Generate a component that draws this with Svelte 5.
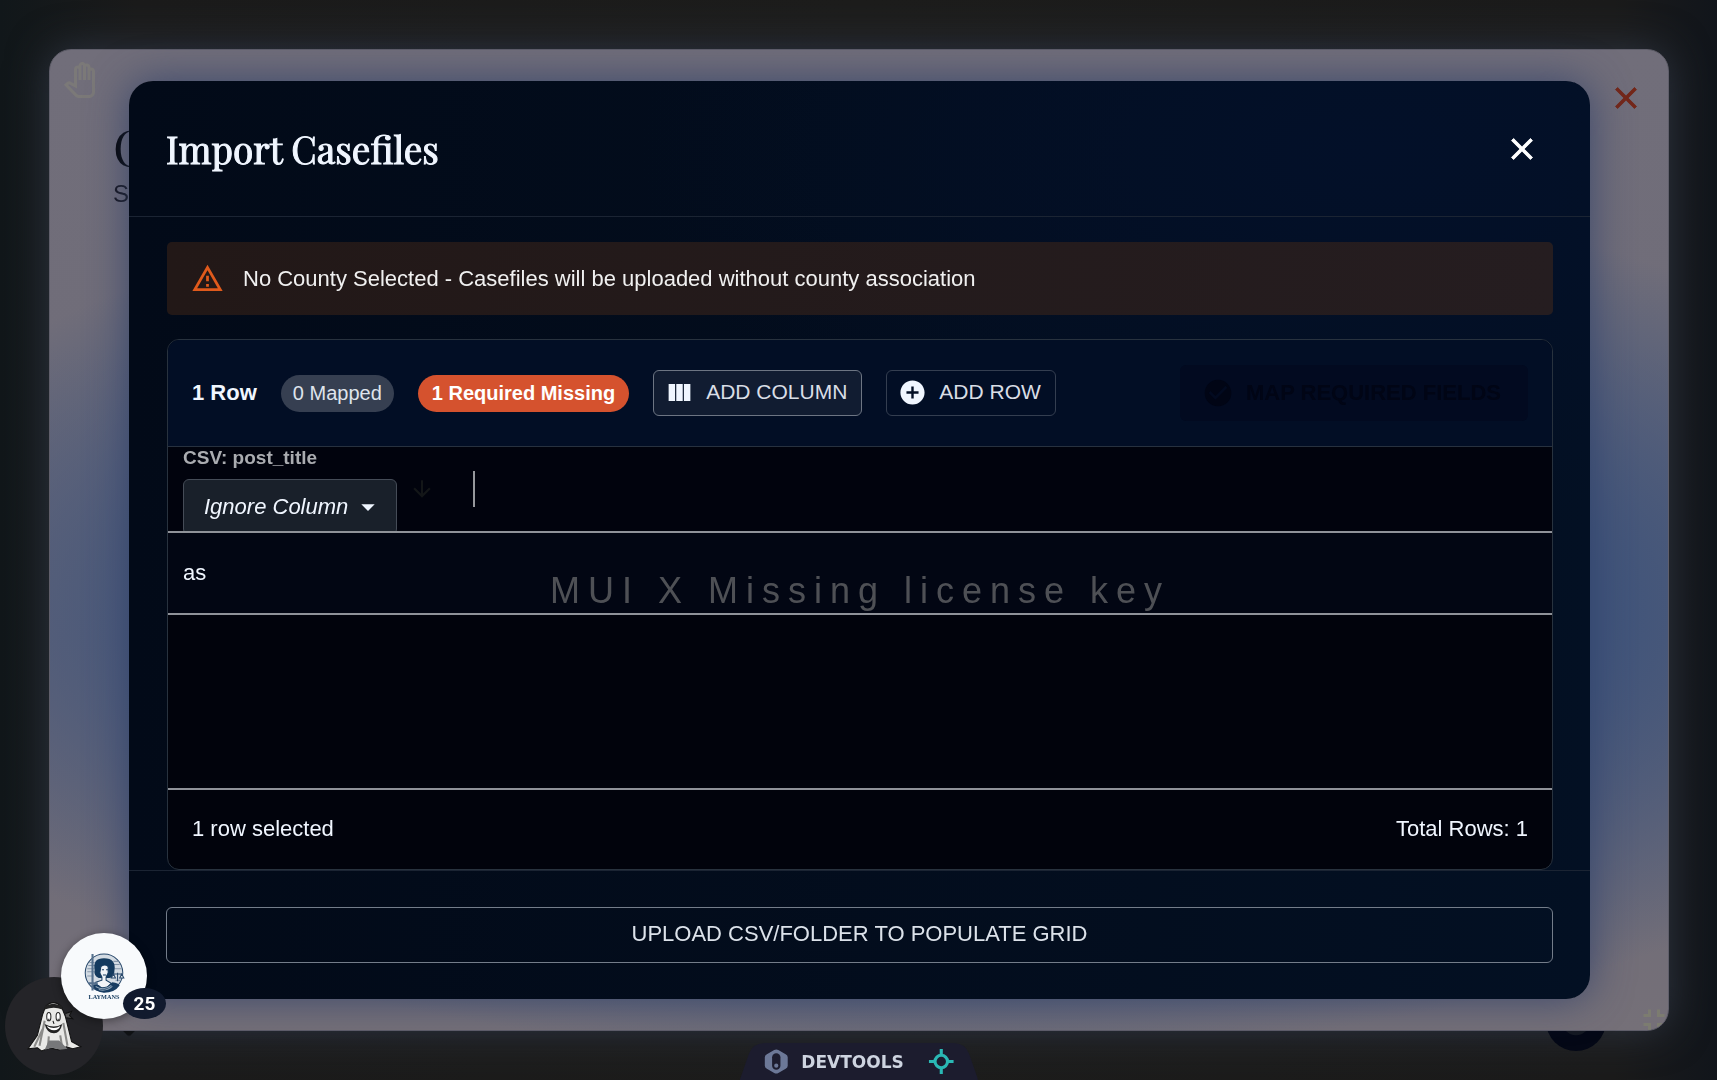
<script>
  const columns = [{ field: 'post_title', mapping: 'Ignore Column' }];
  let rows = $state([{ post_title: 'as' }]);
  let mapped = $state(0);
  let missing = $state(1);

  const addRow = () => rows.push({ post_title: '' });
</script>

<div class="stage">
  <button class="help" aria-label="Help">
    <svg viewBox="0 0 24 24"><circle cx="12" cy="12" r="8" fill="none" stroke="currentColor" stroke-width="3" /></svg>
  </button>
  <span class="tip"></span>

  <main class="backdrop-window">
    <div class="window-bar">
      <svg class="hand" viewBox="0 0 24 24">
        <path d="M18 24h-6.55c-1.08 0-2.14-.45-2.89-1.23l-7.3-7.61 2.07-1.83c.62-.55 1.53-.66 2.26-.27L8 14.34V4.79c0-1.38 1.12-2.5 2.5-2.5.17 0 .34.02.51.05.09-1.3 1.17-2.33 2.49-2.33.86 0 1.61.43 2.06 1.09.29-.12.61-.18.94-.18 1.38 0 2.5 1.12 2.5 2.5v.28c.16-.03.33-.05.5-.05 1.38 0 2.5 1.12 2.5 2.5V20c0 2.21-1.79 4-4 4zM4.14 15.28l5.86 6.1c.38.39.9.62 1.44.62H18c1.1 0 2-.9 2-2V6.15c0-.28-.22-.5-.5-.5s-.5.22-.5.5V12h-2V3.42c0-.28-.22-.5-.5-.5s-.5.22-.5.5V12h-2V2.51c0-.28-.22-.5-.5-.5s-.5.22-.5.5V12h-2V4.79c0-.28-.22-.5-.5-.5s-.5.23-.5.5v12.87l-5.35-2.83-.51.45z" />
      </svg>
      <button class="icon-button danger" aria-label="Close window">
        <svg viewBox="0 0 24 24" stroke="currentColor" stroke-width=".6" stroke-linejoin="round"><path d="M19 6.41 17.59 5 12 10.59 6.41 5 5 6.41 10.59 12 5 17.59 6.41 19 12 13.41 17.59 19 19 17.59 13.41 12z" /></svg>
      </button>
    </div>
    <div class="window-head">
      <h1>C</h1>
      <p>S</p>
    </div>
    <svg class="shrink" viewBox="0 0 24 24">
      <path d="M5 16h3v3h2v-5H5v2zm3-8H5v2h5V5H8v3zm6 11h2v-3h3v-2h-5v5zm2-11V5h-2v5h5V8h-3z" />
    </svg>
  </main>

  <section class="dialog" role="dialog" aria-labelledby="dialog-title">
    <header>
      <h2 id="dialog-title">Import Casefiles</h2>
      <button class="icon-button" aria-label="Close">
        <svg viewBox="0 0 24 24" stroke="currentColor" stroke-width=".6" stroke-linejoin="round"><path d="M19 6.41 17.59 5 12 10.59 6.41 5 5 6.41 10.59 12 5 17.59 6.41 19 12 13.41 17.59 19 19 17.59 13.41 12z" /></svg>
      </button>
    </header>

    <div class="content">
      <div class="alert" role="alert">
        <svg viewBox="0 0 24 24"><path d="M12 5.99 19.53 19H4.47L12 5.99M12 2 1 21h22L12 2zm1 14h-2v2h2v-2zm0-6h-2v4h2v-4z" /></svg>
        No County Selected - Casefiles will be uploaded without county association
      </div>

      <div class="grid">
        <div class="toolbar">
          <strong>{rows.length} Row</strong>
          <span class="chip">{mapped} Mapped</span>
          <span class="chip error">{missing} Required Missing</span>
          <button class="tool active">
            <svg viewBox="0 0 24 24"><path d="M14.67 5v14H9.33V5h5.34zm1 14H21V5h-5.33v14zm-7.34 0V5H3v14h5.33z" /></svg>
            ADD COLUMN
          </button>
          <button class="tool" onclick={addRow}>
            <svg viewBox="0 0 24 24"><path d="M12 2C6.48 2 2 6.48 2 12s4.48 10 10 10 10-4.48 10-10S17.52 2 12 2zm5 11h-4v4h-2v-4H7v-2h4V7h2v4h4v2z" /></svg>
            ADD ROW
          </button>
          <button class="map" disabled>
            <svg viewBox="0 0 24 24"><path d="M12 2C6.48 2 2 6.48 2 12s4.48 10 10 10 10-4.48 10-10S17.52 2 12 2zm-2 15-5-5 1.41-1.41L10 14.17l7.59-7.59L19 8l-9 9z" /></svg>
            MAP REQUIRED FIELDS
          </button>
        </div>

        <div class="body">
          <table>
            <thead>
              <tr>
                {#each columns as column}
                  <th>
                    <div class="column-head">
                      <div class="mapping">
                        <label for={column.field}>CSV: {column.field}</label>
                        <div class="select">
                          <select id={column.field}>
                            <option>{column.mapping}</option>
                          </select>
                          <svg viewBox="0 0 24 24"><path d="m7 10 5 5 5-5z" /></svg>
                        </div>
                      </div>
                      <svg class="sort" viewBox="0 0 24 24"><path d="m20 12-1.41-1.41L13 16.17V4h-2v12.17l-5.58-5.59L4 12l8 8 8-8z" /></svg>
                      <span class="separator"></span>
                    </div>
                  </th>
                {/each}
              </tr>
            </thead>
            <tbody>
              {#each rows as row}
                <tr>
                  {#each columns as column}
                    <td>{row[column.field]}</td>
                  {/each}
                </tr>
              {/each}
            </tbody>
          </table>
          <div class="watermark">MUI X Missing license key</div>
        </div>

        <div class="grid-footer">
          <span>1 row selected</span>
          <span>Total Rows: {rows.length}</span>
        </div>
      </div>
    </div>

    <footer>
      <button class="upload">UPLOAD CSV/FOLDER TO POPULATE GRID</button>
    </footer>
  </section>
</div>

<button class="ghost" aria-label="Assistant">
  <svg viewBox="0 0 54 50">
    <path d="M19 6q7-7 15 0l4 10 6 24 9 5-8 2-6-2-7 3-9-2-8 3-4-3-9 1 9-13 5-20z" fill="#e9e9e7" stroke="#111" stroke-width="1" />
    <path d="M18 20 13 44M16 28 8 45M36 22l4 22M33 34l2 12M22 35l-1 12" stroke="#8b8b89" stroke-width="2" fill="none" />
    <path d="M22 39h10l8 8-7 1-8-2-7 2z" fill="#77787a" />
    <path d="M18 6q8-5 17 0v3q-8-3-17 0z" fill="#222" />
    <path d="M38 13l6-2-2 4 3 3-6-1" fill="#555" stroke="#111" />
    <ellipse cx="22" cy="16" rx="2" ry="4" fill="#fff" stroke="#222" />
    <ellipse cx="31" cy="16" rx="2" ry="4" fill="#fff" stroke="#222" />
    <path d="M22 18v2M31 18v2M26 20l1 3" stroke="#111" stroke-width="1" />
    <path d="M18 23q9 5 17 0-2 9-8 9-7 0-9-9z" fill="#222" />
    <path d="M20 25q7 4 13 0-1 4-6 4t-7-4z" fill="#fff" />
  </svg>
</button>

<button class="brand" aria-label="Laymans, 25 notifications">
  <svg viewBox="0 0 40 46">
    <circle cx="20" cy="20" r="18" fill="#d3dbe3" stroke="#29496c" stroke-width="1" />
    <path d="M5 13h7M4 16h7M4 19h7M4 23h6M6 10h5M29 9h5M29 12h6M30 16h7M31 27h6" stroke="#8798ab" />
    <path d="M11 17q-2-11 9-11 12 0 10 12 0 7-5 7H15q-5-2-4-8z" fill="#143a5e" />
    <path d="M17 14q4-3 7 0v6l-2 4v3l5 3-5 5-7-1-3-5 6-2v-3l-2-4z" fill="#f1f4f7" stroke="#143a5e" stroke-width="1" />
    <path d="M18 17h2M22 17h2M19 22h3" stroke="#143a5e" />
    <path d="M8 32q5-3 10 2l5-1 5-4q6 1 7 3-5 7-15 7-8-1-12-7z" fill="#173c61" />
    <path d="M12 33q8 5 15-1M15 36q7 2 13-3" fill="none" stroke="#8ea4b8" />
    <path d="M9 2v30M5 30h9M9 31v6" stroke="#55708d" stroke-width="2" />
    <path d="M29 21h8M33 20v8M29 21l-2 4h4zM37 21l-2 4h4z" stroke="#29496c" fill="#e9eef2" />
    <text x="20" y="45" text-anchor="middle">LAYMANS</text>
  </svg>
  <span class="count">25</span>
</button>

<button class="devtools">
  <svg class="tab" viewBox="0 0 237 37" preserveAspectRatio="none">
    <path d="M0 37 9 11Q13 0 25 0h187q12 0 16 11l9 26z" />
  </svg>
  <svg viewBox="0 0 24 24">
    <path d="M10 1q2-1 4 0l7 4q2 1 2 3v8q0 2-2 3l-7 4q-2 1-4 0l-7-4q-2-1-2-3V8q0-2 2-3z" fill="#6c7897" />
    <rect x="8" y="4" width="8" height="16" rx="4" fill="#1c1c2e" />
    <circle cx="12" cy="16" r="2" fill="#6c7897" />
  </svg>
  DEVTOOLS
  <svg class="target" viewBox="0 0 24 24">
    <circle cx="12" cy="12" r="6" />
    <path d="M12 0v6M12 18v6M0 12h6M18 12h6" />
  </svg>
</button>

<style>
  :global(body) {
    margin: 0;
    background: #191b1c;
    font-family: 'Liberation Sans', Arial, sans-serif;
  }

  button,
  select {
    font: inherit;
    color: inherit;
    margin: 0;
    cursor: pointer;
  }

  svg {
    flex: none;
    fill: currentColor;
  }

  .stage {
    display: grid;
    grid-template-columns: minmax(0, 1fr);
    box-sizing: border-box;
    min-height: 100vh;
    background: linear-gradient(90deg, #11171a, #1b1b1b 8%, #1d1d1c 50%, #1b1b1b 94%, #11151b);
  }

  .backdrop-window,
  .dialog {
    grid-area: 1 / 1;
    box-sizing: border-box;
  }

  .backdrop-window {
    position: relative;
    overflow: hidden;
    margin: 49px 48px 49px 49px;
    border: 1px solid #5f5e6a;
    border-radius: 22px;
    background:
      radial-gradient(ellipse 70% 46% at 54% 57%, #40547a 60%, transparent),
      linear-gradient(#716e7a, #706d79 30%, #6a6878 60%, #757078);
    color: #000;
  }

  .stage::before {
    content: '';
    grid-area: 1 / 1;
    margin: 49px 48px 49px 49px;
    border-radius: 22px;
    box-shadow: 0 0 40px #2d3441;
  }

  .window-bar {
    display: flex;
    justify-content: space-between;
    padding: 12px 24px 0 12px;
  }

  .hand {
    width: 36px;
    height: 36px;
    color: #7b7978;
  }

  .icon-button {
    display: grid;
    place-items: center;
    padding: 0;
    border: 0;
    background: none;
    color: #fff;
  }

  .icon-button svg {
    width: 36px;
    height: 36px;
  }

  .danger {
    padding-top: 18px;
    color: #742719;
  }

  .window-head {
    padding: 0 63px;
  }

  .window-head h1 {
    margin: 0;
    font: 50px/62px 'Playfair Display', 'Liberation Serif', serif;
  }

  .window-head p {
    margin: 0;
    font-size: 24px;
    line-height: 32px;
    color: #14131a;
  }

  .shrink {
    position: absolute;
    right: -4px;
    bottom: -8px;
    width: 36px;
    height: 36px;
    color: #7c7c70;
  }

  .help {
    position: fixed;
    right: 111px;
    bottom: 29px;
    width: 60px;
    height: 60px;
    padding: 12px;
    border: 0;
    border-radius: 50%;
    background: #040816;
    color: #141821;
  }

  .tip {
    position: fixed;
    left: 122px;
    bottom: 46px;
    width: 14px;
    height: 14px;
    border-radius: 3px;
    background: #101214;
    rotate: 45deg;
  }

  .dialog {
    position: relative;
    display: flex;
    flex-direction: column;
    margin: 81px 127px 81px 129px;
    border-radius: 24px;
    background:
      radial-gradient(ellipse 50% 40% at 85% 8%, #031029, transparent),
      linear-gradient(90deg, #020a18, #030e1f 70%, #031023);
    box-shadow: 0 0 40px #2f3e6ad0;
    color: #f0f6ff;
    font-size: 22px;
  }

  header {
    display: flex;
    align-items: center;
    justify-content: space-between;
    box-sizing: border-box;
    height: 136px;
    padding: 0 50px 0 37px;
    border-bottom: 1px solid #1b2433;
  }

  h2 {
    margin: 0;
    font: 400 37px/48px 'Playfair Display', 'Liberation Serif', serif;
    -webkit-text-stroke: 1px currentColor;
  }

  .content {
    display: flex;
    flex: 1;
    flex-direction: column;
    gap: 24px;
    padding: 25px 37px 0 38px;
  }

  .alert {
    display: flex;
    align-items: center;
    gap: 19px;
    box-sizing: border-box;
    height: 73px;
    padding: 0 24px;
    border-radius: 5px;
    background: linear-gradient(90deg, #221817, #251d20);
    color: #f0f0f0;
  }

  .alert svg {
    width: 33px;
    height: 33px;
    color: #e05a1c;
  }

  .grid {
    display: flex;
    flex: 1;
    flex-direction: column;
    overflow: hidden;
    border: 1px solid #28323e;
    border-radius: 12px;
    background: #01030c;
  }

  .toolbar {
    display: flex;
    align-items: center;
    gap: 24px;
    box-sizing: border-box;
    height: 107px;
    padding: 0 24px;
    border-bottom: 1px solid #27313f;
    background: #020e25;
  }

  .chip {
    padding: 0 12px;
    border-radius: 19px;
    background: #363f51;
    color: #dfe4ec;
    font-size: 20px;
    line-height: 37px;
  }

  .error {
    padding: 0 14px;
    background: #d5522e;
    color: #fff;
    font-weight: bold;
  }

  .tool,
  .map {
    display: flex;
    align-items: center;
    gap: 12px;
    box-sizing: border-box;
    height: 46px;
    padding: 0 14px 2px 11px;
    border: 1px solid #343e50;
    border-radius: 6px;
    background: none;
    color: #d9dee6;
    font-size: 21px;
  }

  .tool svg {
    width: 29px;
    height: 29px;
    color: #f0f6ff;
  }

  .active {
    border-color: #6d7583;
    background: #111c31;
  }

  .map {
    height: 56px;
    margin-left: auto;
    padding: 0 27px 0 22px;
    border: 0;
    background: #020a20;
    color: #010515;
    font-size: 22px;
    font-weight: bold;
  }

  .map svg {
    width: 32px;
    height: 32px;
  }

  .body {
    position: relative;
    flex: 1;
  }

  table {
    width: 100%;
    border-collapse: collapse;
  }

  th,
  td {
    padding: 0 15px;
    border-bottom: 2px solid #8f9299;
    text-align: left;
  }

  th {
    background: #01030d;
  }

  td {
    height: 80px;
    background: #020613;
  }

  .column-head {
    display: flex;
    height: 84px;
    overflow: hidden;
  }

  label {
    display: block;
    color: #aaacb0;
    font-size: 19px;
    line-height: 22px;
  }

  .select {
    display: flex;
    align-items: center;
    position: relative;
    margin-top: 10px;
  }

  select {
    appearance: none;
    width: 214px;
    height: 56px;
    padding: 0 40px 2px 20px;
    border: 1px solid #454c57;
    border-radius: 6px;
    background: #19202a;
    font-style: italic;
    font-weight: normal;
  }

  .select svg {
    position: absolute;
    right: 13px;
    width: 32px;
    height: 32px;
    pointer-events: none;
  }

  .sort {
    width: 26px;
    height: 26px;
    margin: 29px 38px 0 12px;
    color: #131618;
  }

  .separator {
    width: 2px;
    height: 36px;
    margin-top: 24px;
    background: #96989c;
  }

  .watermark {
    position: absolute;
    inset: 0 0 54px;
    display: grid;
    place-items: center;
    color: rgba(130, 130, 130, 0.6);
    font-size: 36px;
    letter-spacing: 8px;
    pointer-events: none;
  }

  .grid-footer {
    display: flex;
    align-items: center;
    justify-content: space-between;
    box-sizing: border-box;
    height: 81px;
    padding: 0 24px 2px;
    border-top: 2px solid #8f9299;
  }

  footer {
    padding: 36px 37px;
    border-top: 1px solid #1b2433;
  }

  .upload {
    width: 100%;
    height: 56px;
    padding: 0 0 2px;
    border: 1px solid #747d8a;
    border-radius: 6px;
    background: none;
    color: #dce2ea;
  }

  .ghost,
  .brand {
    position: fixed;
    display: grid;
    place-items: center;
    padding: 0;
    border: 0;
    border-radius: 50%;
  }

  .ghost {
    left: 5px;
    bottom: 5px;
    width: 98px;
    height: 98px;
    background: #242428;
  }

  .ghost svg {
    width: 56px;
    height: 52px;
  }

  .brand {
    left: 61px;
    bottom: 61px;
    width: 86px;
    height: 86px;
    background: #f8fafc;
    box-shadow: 0 2px 10px #0006;
  }

  .brand > svg {
    width: 42px;
    height: 48px;
  }

  .brand text {
    fill: #143a5e;
    font: bold 6px 'Liberation Serif', serif;
  }

  .count {
    position: absolute;
    right: -19px;
    bottom: 0;
    width: 43px;
    border-radius: 50%;
    background: #111a2e;
    color: #fff;
    font: bold 19px/31px Roboto, sans-serif;
  }

  .devtools {
    position: fixed;
    bottom: 0;
    left: 50%;
    translate: -50%;
    display: flex;
    align-items: center;
    gap: 13px;
    height: 37px;
    padding: 0 24px;
    border: 0;
    background: none;
    color: #ced4e0;
    font: bold 17px 'DejaVu Sans', sans-serif;
  }

  .devtools svg {
    width: 25px;
    height: 25px;
  }

  .devtools .tab {
    position: absolute;
    inset: 0;
    z-index: -1;
    width: 100%;
    height: 100%;
    fill: #1c1c2e;
  }

  .devtools .target {
    margin-left: 12px;
    fill: none;
    stroke: #2ab8b4;
    stroke-width: 3;
  }
</style>
